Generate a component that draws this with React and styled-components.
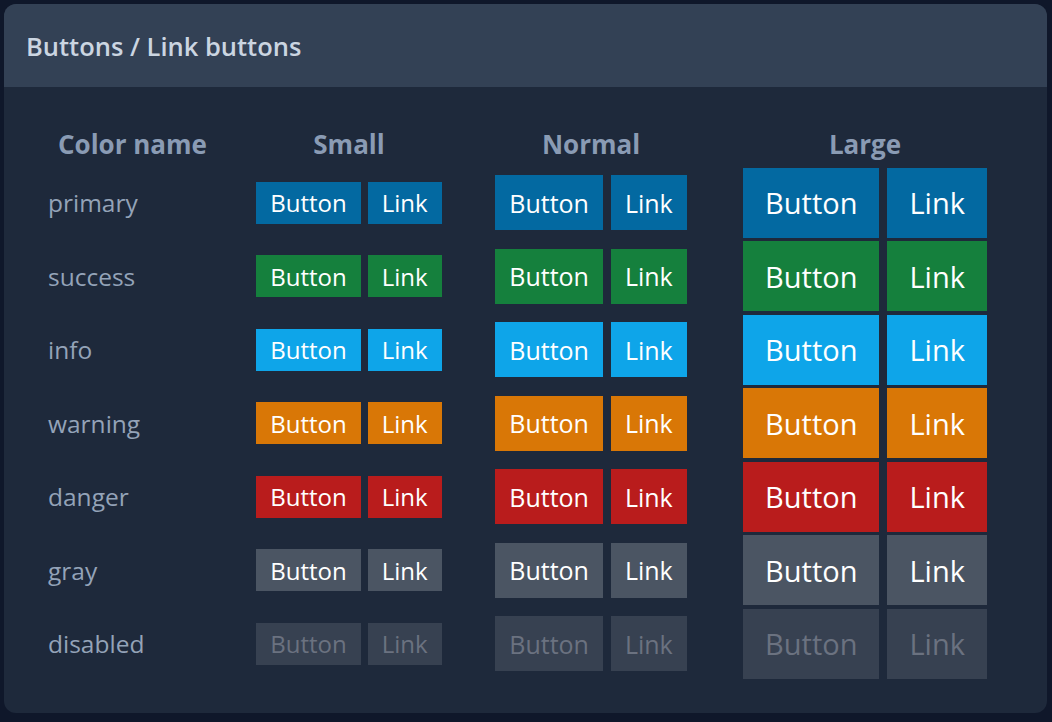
import React from 'react';
import styled, { createGlobalStyle } from 'styled-components';

const GlobalStyle = createGlobalStyle`
  html, body {
    margin: 0;
    padding: 0;
    background: #0f172a;
    font-family: 'Open Sans', 'Noto Sans', sans-serif;
  }
`;

const colors = {
  primary: '#0369a1',
  success: '#15803d',
  info: '#0ea5e9',
  warning: '#d97706',
  danger: '#b91c1c',
  gray: '#4b5563',
  disabled: '#374151',
};

// button sizes: height, horizontal padding, font size, gap between the pair
const sizes = {
  small: { height: 42, pad: 14, font: 24, gap: 7 },
  normal: { height: 55, pad: 14, font: 25, gap: 8 },
  large: { height: 70, pad: 22, font: 29, gap: 8 },
};

const rows = ['primary', 'success', 'info', 'warning', 'danger', 'gray', 'disabled'];

const Page = styled.div`
  padding: 4px 5px 9px 4px;
`;

const Card = styled.section`
  background: #1e293b;
  border-radius: 12px;
  overflow: hidden;
  height: 709px;
`;

const CardHeader = styled.header`
  height: 83px;
  background: #334155;
  display: flex;
  align-items: center;
  padding-left: 22px;
  color: #cbd5e1;
  font-size: 25.5px;
  font-weight: 600;
`;

const CardBody = styled.div`
  padding: 35px 0 0 44px;
`;

const Table = styled.div`
  display: grid;
  grid-template-columns: 169px 264px 220px 328px;
  grid-template-rows: 44px;
  grid-auto-rows: 73.5px;
  align-items: center;
`;

const HeadCell = styled.div`
  text-align: center;
  color: #8a9bb4;
  font-size: 26px;
  font-weight: 700;
`;

const Label = styled.div`
  color: #94a3b8;
  font-size: 24.5px;
`;

const Group = styled.div`
  display: flex;
  justify-content: center;
  align-items: center;
  gap: ${(p) => sizes[p.$size].gap}px;
`;

const Btn = styled.a`
  display: inline-flex;
  align-items: center;
  justify-content: center;
  box-sizing: border-box;
  border: 0;
  margin: 0;
  font-family: inherit;
  height: ${(p) => sizes[p.$size].height}px;
  padding: 0 ${(p) => sizes[p.$size].pad}px;
  font-size: ${(p) => sizes[p.$size].font}px;
  background: ${(p) => colors[p.$color]};
  color: ${(p) => (p.$color === 'disabled' ? '#6b7280' : '#ffffff')};
  text-decoration: none;
  cursor: ${(p) => (p.$color === 'disabled' ? 'default' : 'pointer')};
`;

const App = () => (
  <Page>
    <GlobalStyle />
    <Card>
      <CardHeader>Buttons / Link buttons</CardHeader>
      <CardBody>
        <Table>
          <HeadCell>Color name</HeadCell>
          <HeadCell>Small</HeadCell>
          <HeadCell>Normal</HeadCell>
          <HeadCell>Large</HeadCell>
          {rows.map((color) => (
            <React.Fragment key={color}>
              <Label>{color}</Label>
              {['small', 'normal', 'large'].map((size) => (
                <Group key={size} $size={size}>
                  <Btn as="button" $size={size} $color={color} disabled={color === 'disabled'}>
                    Button
                  </Btn>
                  <Btn href="#" $size={size} $color={color}>
                    Link
                  </Btn>
                </Group>
              ))}
            </React.Fragment>
          ))}
        </Table>
      </CardBody>
    </Card>
  </Page>
);

export default App;
